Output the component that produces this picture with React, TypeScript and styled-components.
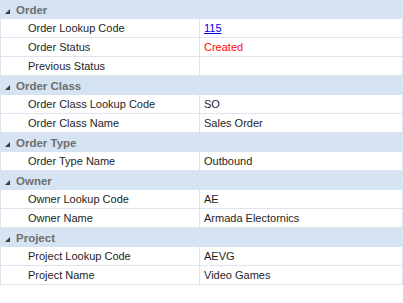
import React from "react";
import styled, { createGlobalStyle } from "styled-components";

const Global = createGlobalStyle`
  html, body { margin: 0; padding: 0; background: #ffffff; }
  body { font-family: "Liberation Sans", Arial, sans-serif; }
`;

type Field = { label: string; value?: string; kind?: "link" | "status" };
type Section = { title: string; fields: Field[] };

const sections: Section[] = [
  {
    title: "Order",
    fields: [
      { label: "Order Lookup Code", value: "115", kind: "link" },
      { label: "Order Status", value: "Created", kind: "status" },
      { label: "Previous Status", value: "" },
    ],
  },
  {
    title: "Order Class",
    fields: [
      { label: "Order Class Lookup Code", value: "SO" },
      { label: "Order Class Name", value: "Sales Order" },
    ],
  },
  { title: "Order Type", fields: [{ label: "Order Type Name", value: "Outbound" }] },
  {
    title: "Owner",
    fields: [
      { label: "Owner Lookup Code", value: "AE" },
      { label: "Owner Name", value: "Armada Electornics" },
    ],
  },
  {
    title: "Project",
    fields: [
      { label: "Project Lookup Code", value: "AEVG" },
      { label: "Project Name", value: "Video Games" },
    ],
  },
];

const Grid = styled.div`
  width: 403px;
  box-sizing: border-box;
  border-right: 1px solid #dde4ee;
  border-left: 1px solid #dde4ee;
  font-family: "Liberation Sans", Arial, sans-serif;
  font-size: 11px;
`;

const Header = styled.div`
  height: 19px;
  box-sizing: border-box;
  display: flex;
  align-items: center;
  background: #d5e3f2;
  color: #6f6f6f;
  font-weight: bold;
  font-size: 11.5px;
  padding-left: 4px;
  gap: 6px;
`;

const Row = styled.div`
  height: 19px;
  box-sizing: border-box;
  display: grid;
  grid-template-columns: 199px 1fr;
  border-bottom: 1px solid #dde4ee;
  background: #ffffff;
`;

const Label = styled.div`
  padding-left: 27px;
  display: flex;
  align-items: center;
  color: #1e1e1e;
  border-right: 1px solid #dde4ee;
  white-space: nowrap;
`;

const Value = styled.div<{ $kind?: string }>`
  padding-left: 4px;
  display: flex;
  align-items: center;
  white-space: nowrap;
  color: ${(p) => (p.$kind === "status" ? "#ff0a0a" : "#1e1e1e")};
`;

const Link = styled.a`
  color: #0000ee;
  text-decoration: underline;
`;

const Arrow = () => (
  <svg width="5" height="5" viewBox="0 0 5 5" style={{ marginTop: 4 }}>
    <polygon points="5,0 5,5 0,5" fill="#3c3c3c" />
  </svg>
);

export default function App() {
  return (
    <>
      <Global />
      <Grid>
        {sections.map((s) => (
          <React.Fragment key={s.title}>
            <Header>
              <Arrow />
              <span>{s.title}</span>
            </Header>
            {s.fields.map((f) => (
              <Row key={f.label}>
                <Label>{f.label}</Label>
                <Value $kind={f.kind}>
                  {f.kind === "link" ? <Link href="#">{f.value}</Link> : f.value}
                </Value>
              </Row>
            ))}
          </React.Fragment>
        ))}
      </Grid>
    </>
  );
}
